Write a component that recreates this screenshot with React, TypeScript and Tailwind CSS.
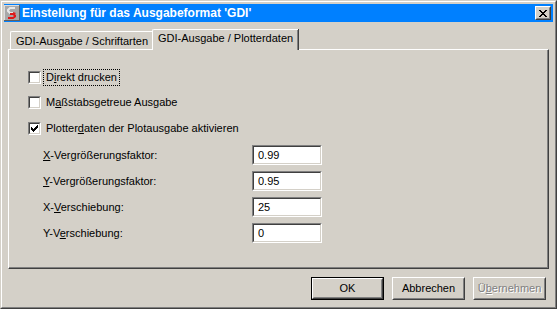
import React from "react";

/* Win2000 style dialog: "Einstellung für das Ausgabeformat 'GDI'" */

function CheckBox({ checked }: { checked?: boolean }) {
  return (
    <span className="flex h-[13px] w-[13px] shrink-0 border border-t-[#808080] border-l-[#808080] border-b-white border-r-white">
      <span className="flex h-full w-full items-center justify-center border border-t-[#404040] border-l-[#404040] border-b-[#d4d0c8] border-r-[#d4d0c8] bg-white">
        {checked && (
          <svg width="7" height="7" viewBox="0 0 7 7" shapeRendering="crispEdges">
            <path
              d="M0 2h1v3H0z M1 3h1v3H1z M2 4h1v3H2z M3 3h1v3H3z M4 2h1v3H4z M5 1h1v3H5z M6 0h1v3H6z"
              fill="#000"
            />
          </svg>
        )}
      </span>
    </span>
  );
}

function CheckRow({
  checked,
  focused,
  children,
  className = "",
}: {
  checked?: boolean;
  focused?: boolean;
  children: React.ReactNode;
  className?: string;
}) {
  return (
    <div className={`flex h-[17px] items-center pl-[19px] ${className}`}>
      <CheckBox checked={checked} />
      <span
        className={`ml-[2px] flex h-[17px] items-center border px-[2px] ${
          focused ? "border-dotted border-black" : "border-transparent"
        }`}
      >
        {children}
      </span>
    </div>
  );
}

function Field({ label, value }: { label: React.ReactNode; value: string }) {
  return (
    <div className="flex h-[20px] items-center pl-[34px]">
      <span className="w-[209px]">{label}</span>
      <div className="h-[20px] w-[70px] border border-t-[#808080] border-l-[#808080] border-b-white border-r-white">
        <div className="flex h-full items-center border border-t-[#404040] border-l-[#404040] border-b-[#d4d0c8] border-r-[#d4d0c8] bg-white pl-[4px]">
          {value}
        </div>
      </div>
    </div>
  );
}

function Button({
  children,
  isDefault,
  disabled,
}: {
  children: React.ReactNode;
  isDefault?: boolean;
  disabled?: boolean;
}) {
  return (
    <div className={`h-[23px] w-[73px] ${isDefault ? "border border-black" : ""}`}>
      <div className="h-full border border-t-white border-l-white border-b-[#404040] border-r-[#404040]">
        <div
          className={`flex h-full items-center justify-center border border-t-[#d4d0c8] border-l-[#d4d0c8] border-b-[#808080] border-r-[#808080] ${
            disabled ? "text-[#808080] [text-shadow:1px_1px_0_#ffffff]" : "text-black"
          }`}
        >
          {children}
        </div>
      </div>
    </div>
  );
}

function AppIcon() {
  return (
    <svg width="16" height="16" viewBox="0 0 16 16" shapeRendering="crispEdges">
      <rect x="0" y="0" width="16" height="16" fill="#dcdcdc" />
      <rect x="1" y="1" width="14" height="14" fill="#a8a8a8" />
      <rect x="15" y="0" width="1" height="16" fill="#606060" />
      <rect x="0" y="15" width="16" height="1" fill="#606060" />
      <path d="M11 3H6L4 5v1l2 2h3" fill="none" stroke="#e8e8e8" strokeWidth="2" shapeRendering="auto" />
      <path d="M6 9h3l2 1.5v1L9 13H4" fill="none" stroke="#e01818" strokeWidth="2" shapeRendering="auto" />
      <path d="M9 7l3 1-2 2z" fill="#e01818" shapeRendering="auto" />
    </svg>
  );
}

export default function App() {
  return (
    <div className="h-[309px] w-[557px] font-['Liberation_Sans',Arial,sans-serif] text-[11px] leading-[13px] text-black">
      {/* window frame */}
      <div className="h-full border border-t-[#d4d0c8] border-l-[#d4d0c8] border-b-[#404040] border-r-[#404040] bg-[#d4d0c8]">
        <div className="flex h-full flex-col border border-t-white border-l-white border-b-[#808080] border-r-[#808080] p-[2px]">
          {/* title bar */}
          <div className="flex h-[18px] items-center bg-[#0080ff] pr-[2px]">
            <AppIcon />
            <span className="ml-[2px] text-[12px] font-bold leading-[14px] text-white">
              Einstellung für das Ausgabeformat 'GDI'
            </span>
            <div className="ml-auto h-[14px] w-[16px] border border-t-white border-l-white border-b-[#404040] border-r-[#404040] bg-[#d4d0c8]">
              <div className="flex h-full items-center justify-center border border-t-[#d4d0c8] border-l-[#d4d0c8] border-b-[#808080] border-r-[#808080]">
                <svg width="8" height="7" viewBox="0 0 8 7" shapeRendering="crispEdges">
                  <path
                    d="M0 0h2v1H0z M6 0h2v1H6z M1 1h2v1H1z M5 1h2v1H5z M2 2h4v1H2z M3 3h2v1H3z M2 4h4v1H2z M1 5h2v1H1z M5 5h2v1H5z M0 6h2v1H0z M6 6h2v1H6z"
                    fill="#000"
                  />
                </svg>
              </div>
            </div>
          </div>

          {/* body */}
          <div className="flex flex-1 flex-col px-[4px] pt-[7px]">
            {/* tabs */}
            <div className="flex h-[20px] items-end pl-[2px]">
              <div className="h-[18px] w-[144px] rounded-tl-[2px] border-l border-t border-white pl-[5px] pt-[3px] shadow-[inset_-1px_0_0_#808080,1px_0_0_#404040]">
                GDI-Ausgabe / Schriftarten
              </div>
              <div className="relative z-10 -mb-[1px] -ml-[2px] h-[21px] w-[146px] rounded-tl-[2px] border-l border-t border-white bg-[#d4d0c8] pl-[5px] pt-[2px] shadow-[inset_-1px_0_0_#808080,1px_0_0_#404040]">
                GDI-Ausgabe / Plotterdaten
              </div>
            </div>

            {/* tab panel */}
            <div className="h-[220px] border border-t-white border-l-white border-b-[#404040] border-r-[#404040] shadow-[inset_-1px_-1px_0_#808080]">
              <div className="flex flex-col pt-[19px]">
                <CheckRow focused>
                  D<span className="underline">i</span>rekt drucken
                </CheckRow>
                <CheckRow className="mt-[8px]">
                  M<span className="underline">a</span>ßstabsgetreue Ausgabe
                </CheckRow>
                <CheckRow checked className="mt-[9px]">
                  Plotter<span className="underline">d</span>aten der Plotausgabe aktivieren
                </CheckRow>
                <div className="mt-[8px] flex flex-col gap-[6px]">
                  <Field
                    label={
                      <>
                        <span className="underline">X</span>-Vergrößerungsfaktor:
                      </>
                    }
                    value="0.99"
                  />
                  <Field
                    label={
                      <>
                        <span className="underline">Y</span>-Vergrößerungsfaktor:
                      </>
                    }
                    value="0.95"
                  />
                  <Field
                    label={
                      <>
                        X-<span className="underline">V</span>erschiebung:
                      </>
                    }
                    value="25"
                  />
                  <Field
                    label={
                      <>
                        Y-V<span className="underline">e</span>rschiebung:
                      </>
                    }
                    value="0"
                  />
                </div>
              </div>
            </div>

            {/* buttons */}
            <div className="mt-[8px] flex justify-end gap-[8px] pr-[3px]">
              <Button isDefault>OK</Button>
              <Button>Abbrechen</Button>
              <Button disabled>
                Ü<span className="underline">b</span>ernehmen
              </Button>
            </div>
          </div>
        </div>
      </div>
    </div>
  );
}
